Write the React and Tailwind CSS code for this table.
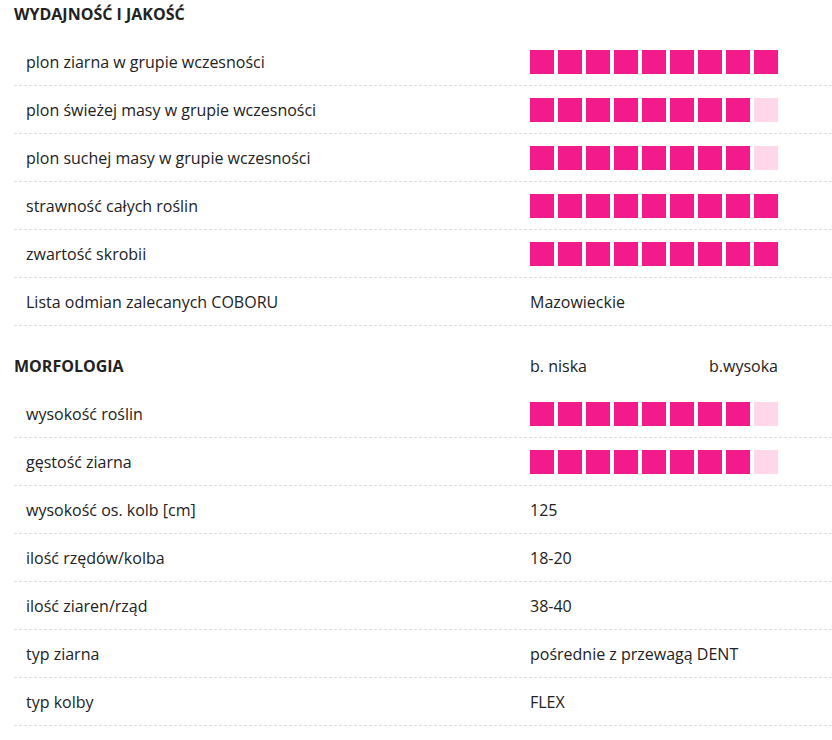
import React from "react";

const PINK = "bg-[#f31b8b]";
const PALE = "bg-[#ffd6ea]";

const Rating = ({ value, max = 9 }) => (
  <div className="flex gap-1">
    {Array.from({ length: max }).map((_, i) => (
      <span key={i} className={`block w-6 h-6 ${i < value ? PINK : PALE}`} />
    ))}
  </div>
);

const Row = ({ label, children }) => (
  <div className="ml-[14px] grid grid-cols-[504px_1fr] items-center h-12 pl-3 border-b border-dashed border-[#dcdcdc]">
    <span>{label}</span>
    <div>{children}</div>
  </div>
);

const Heading = ({ title, extra, className = "" }) => (
  <div className={`ml-[14px] grid grid-cols-[516px_1fr] items-center font-bold uppercase ${className}`}>
    <span>{title}</span>
    {extra}
  </div>
);

const quality = [
  ["plon ziarna w grupie wczesności", 9],
  ["plon świeżej masy w grupie wczesności", 8],
  ["plon suchej masy w grupie wczesności", 8],
  ["strawność całych roślin", 9],
  ["zwartość skrobii", 9],
];

const morph = [
  ["wysokość os. kolb [cm]", "125"],
  ["ilość rzędów/kolba", "18-20"],
  ["ilość ziaren/rząd", "38-40"],
  ["typ ziarna", "pośrednie z przewagą DENT"],
  ["typ kolby", "FLEX"],
];

export default function App() {
  return (
    <div className="w-[832px] h-[740px] overflow-hidden bg-white text-[#222] text-base leading-6 font-['Open_Sans',sans-serif]">
      <Heading title="Wydajność i jakość" className="h-[38px] pb-3 !items-end" />
      {quality.map(([label, v]) => (
        <Row key={label} label={label}>
          <Rating value={v} />
        </Row>
      ))}
      <Row label="Lista odmian zalecanych COBORU">Mazowieckie</Row>

      <Heading
        title="Morfologia"
        className="mt-4 h-12"
        extra={
          <div className="w-[248px] flex justify-between font-normal normal-case">
            <span>b. niska</span>
            <span>b.wysoka</span>
          </div>
        }
      />
      <Row label="wysokość roślin">
        <Rating value={8} />
      </Row>
      <Row label="gęstość ziarna">
        <Rating value={8} />
      </Row>
      {morph.map(([label, v]) => (
        <Row key={label} label={label}>
          {v}
        </Row>
      ))}
    </div>
  );
}
